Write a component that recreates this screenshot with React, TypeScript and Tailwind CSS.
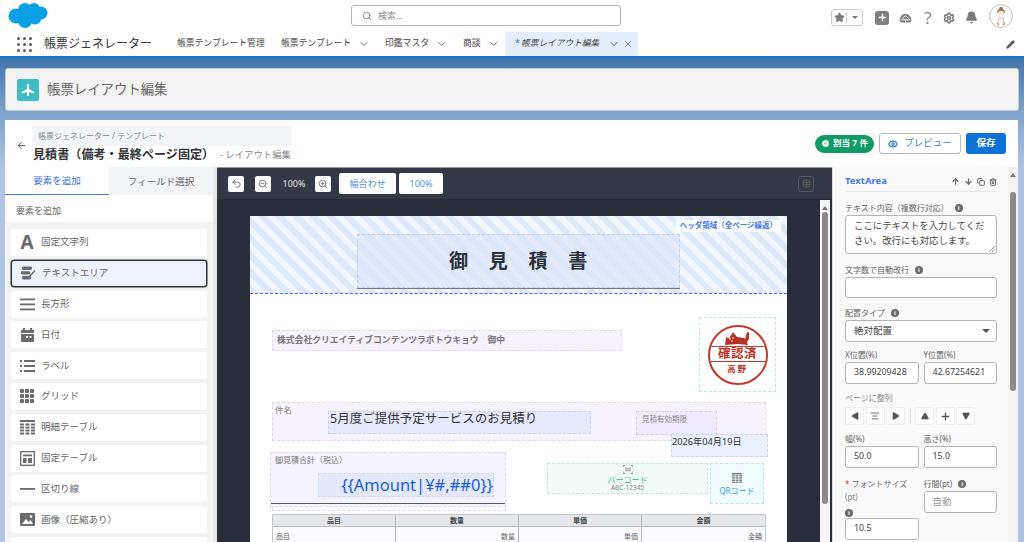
import React from 'react';
import { Search, ChevronDown, X, Star, Plus, Settings, Bell, Pencil, ArrowLeft, Eye, CheckCircle2, Undo2, ZoomIn, ZoomOut, ArrowUp, ArrowDown, Copy, Trash2, AlignCenter, Table, Triangle } from 'lucide-react';

const font = 'font-["Noto_Sans","Noto_Sans_CJK_JP",sans-serif]';

const Logo = () => (
    <svg width="40" height="28" viewBox="0 0 40 28">
        <g fill="#0b9fe3">
            <circle cx="17" cy="9" r="7" />
            <circle cx="26" cy="8" r="6" />
            <circle cx="33" cy="12" r="6.5" />
            <circle cx="8" cy="15" r="7.5" />
            <circle cx="17" cy="20" r="7" />
            <circle cx="27" cy="17" r="6.5" />
        </g>
    </svg>
);

const Waffle = () => (
    <div className="grid grid-cols-3 gap-[3px] w-[15px]">
        {[0, 1, 2, 3, 4, 5, 6, 7, 8].map(i => <div key={i} className="w-[3px] h-[3px] rounded-full bg-[#5c5c5c]" />)}
    </div>
);

const NavItem = ({ label, chevron, className }: { label: string; chevron?: boolean; className?: string }) => (
    <div className={`flex items-center text-[8.8px] text-[#444] whitespace-nowrap ${className ?? ''}`}>
        <span>{label}</span>
        {chevron && <ChevronDown className="w-[12px] h-[12px] ml-[7px] text-[#666]" />}
    </div>
);

const TopBar = () => (
    <div className="h-[32px] flex items-start relative bg-white">
        <div className="ml-[8px] mt-[1px]"><Logo /></div>
        <div className="absolute left-[351px] top-[5px] w-[270px] h-[21px] border border-[#b5b5b5] rounded-[3px] flex items-center pl-[10px] text-[9px] text-[#888]">
            <Search className="w-[10px] h-[10px] text-[#777] mr-[6px]" />検索...
        </div>
        <div className="ml-auto flex items-center mt-[7px] mr-[11px] text-[#8a8a8a]">
            <div className="w-[32px] h-[17px] border border-[#ccc] rounded-[3px] flex items-center mr-[12px]">
                <div className="w-[15px] flex justify-center border-r border-[#ccc]"><Star className="w-[11px] h-[11px] fill-[#7a7a7a] text-[#7a7a7a]" /></div>
                <div className="flex-1 flex justify-center"><div className="w-0 h-0 border-x-[3px] border-x-transparent border-t-[3px] border-t-[#777]" /></div>
            </div>
            <div className="w-[14px] h-[14px] rounded-[3px] bg-[#7f7f7f] flex items-center justify-center mr-[10px]"><Plus className="w-[11px] h-[11px] text-white" strokeWidth={3} /></div>
            <svg width="13" height="13" viewBox="0 0 14 14" className="mr-[11px]">
                <path d="M1 9 A6 6 0 0 1 13 9 A2.4 2.4 0 0 1 11 12.5 H3 A2.4 2.4 0 0 1 1 9 Z" fill="#7f7f7f" />
                <path d="M3.5 8 L7 5 L10.5 8 M2 9.5 H12 M7 9.5 V12.5" stroke="#fff" strokeWidth="1" fill="none" />
            </svg>
            <span className="w-[10px] mr-[10px] text-center text-[17px] leading-none text-[#8a8a8a]">?</span>
            <Settings className="w-[12px] h-[12px] mr-[10px] text-[#7a7a7a]" strokeWidth={3} />
            <Bell className="w-[13px] h-[13px] mr-[11px] fill-[#7a7a7a] text-[#7a7a7a]" />
            <svg width="24" height="24" viewBox="0 0 24 24" className="-mt-[3px]">
                <circle cx="12" cy="12" r="11.4" fill="#fff" stroke="#bbb" />
                <circle cx="12" cy="4.5" r="1.8" fill="#9a6b4f" />
                <path d="M8 9 A4 4 0 0 1 16 9 Z" fill="#9a6b4f" />
                <circle cx="12" cy="10" r="3.2" fill="#fbeee2" />
                <path d="M8.5 21 L10 14 H14 L15.5 21" fill="#fff" stroke="#999" strokeWidth=".6" />
                <path d="M8 19 L10 21 M16 19 L14 21" stroke="#e0a030" strokeWidth="1.6" />
            </svg>
        </div>
    </div>
);

const NavBar = () => (
    <div className="h-[26px] flex items-stretch border-b-2 border-[#1b76d2] bg-white">
        <div className="ml-[17px] mr-[12px] flex items-center"><Waffle /></div>
        <div className="w-[108px] text-[12px] text-[#333] flex items-center mr-[25px] whitespace-nowrap">帳票ジェネレーター</div>
        <NavItem label="帳票テンプレート管理" className="w-[88px] mr-[16px]" />
        <NavItem label="帳票テンプレート" chevron className="w-[89px] mr-[15px]" />
        <NavItem label="印鑑マスタ" chevron className="w-[62px] mr-[16px]" />
        <NavItem label="商談" chevron className="w-[36px] mr-[6px]" />
        <div className="w-[133px] -mt-[2px] border-t-2 border-[#1b76d2] bg-[#e4eefa] flex items-center pl-[10px] text-[8.7px] italic text-[#444] whitespace-nowrap">
            <span className="w-[6px] text-[#1b76d2] not-italic">*</span>
            <span className="w-[78px]">帳票レイアウト編集</span>
            <ChevronDown className="w-[12px] h-[12px] ml-[9px] text-[#666]" />
            <X className="w-[10px] h-[10px] ml-[3px] text-[#666]" />
        </div>
        <div className="ml-auto mr-[9px] flex items-center"><Pencil className="w-[9px] h-[9px] text-[#555] fill-[#555]" /></div>
    </div>
);

const PageHeader = () => (
    <div className="mx-[5px] mt-[10px] h-[43px] bg-[#f3f3f3] border border-[#c9c9c9] rounded-[3px] flex items-center pl-[11px]">
        <div className="w-[22px] h-[22px] bg-[#3fbcc4] rounded-[2px] flex items-center justify-center mr-[8px]">
            <svg width="14" height="14" viewBox="0 0 14 14" fill="#fff"><path d="M6.2 1 H7.8 L8 6 L13 9 V10.5 L8 9 V13 H6 V9 L1 10.5 V9 L6 6 Z" /></svg>
        </div>
        <span className="text-[13.4px] text-[#666] whitespace-nowrap">帳票レイアウト編集</span>
    </div>
);

const EditorHeader = () => (
    <div className="h-[47px] flex items-center relative">
        <ArrowLeft className="w-[11px] h-[11px] text-[#555] ml-[11px] mr-[5px] mt-[4px]" />
        <div className="w-[259px] pt-[3px]">
            <div className="h-[20px] bg-[#f3f4f8] text-[8px] text-[#888] flex items-center pl-[6px]">帳票ジェネレーター / テンプレート</div>
            <div className="h-[19px] flex items-center justify-between whitespace-nowrap pl-[1px]">
                <span className="text-[12.1px] font-bold text-[#333]">見積書（備考・最終ページ固定）</span>
                <span className="text-[9.4px] text-[#888]">- レイアウト編集</span>
            </div>
        </div>
        <div className="ml-auto mr-[12px] flex items-center">
            <div className="h-[18px] w-[59px] rounded-full bg-[#0f9a68] text-white text-[8.5px] font-bold flex items-center justify-center mr-[5px] whitespace-nowrap">
                <CheckCircle2 className="w-[9px] h-[9px] mr-[3px] fill-white text-[#0f9a68]" />割当 7 件
            </div>
            <div className="h-[21px] w-[82px] border border-[#b8b8b8] rounded-[3px] bg-white text-[#3b87d6] text-[9.5px] flex items-center justify-center mr-[5px]">
                <Eye className="w-[10px] h-[10px] mr-[6px]" strokeWidth={3} />プレビュー
            </div>
            <div className="h-[21px] w-[40px] rounded-[3px] bg-[#0b72d6] text-white text-[9.5px] font-bold flex items-center justify-center">保存</div>
        </div>
    </div>
);

const TextAreaIcon = () => (
    <svg width="15" height="14" viewBox="0 0 15 14" fill="#6b6b6b"><rect x="1" y="0.5" width="10" height="3.4" rx="1.4" /><rect x="0" y="5.2" width="9" height="3.4" rx="1.4" /><rect x="1" y="10" width="9" height="3.4" rx="1.4" /><path d="M8.5 10.5 L14 4.5" stroke="#6b6b6b" strokeWidth="1.5" /></svg>
);
const RowsIcon = () => <svg width="15" height="13" viewBox="0 0 15 13" fill="#6b6b6b"><rect y="0.5" width="15" height="1.8" /><rect y="5.5" width="15" height="1.8" /><rect y="10.5" width="15" height="1.8" /></svg>;
const CalIcon = () => <svg width="15" height="14" viewBox="0 0 15 14" fill="#6b6b6b"><rect x="3" width="2" height="3" /><rect x="10" width="2" height="3" /><path d="M1 2 H14 V5 H1 Z" /><path d="M1 6 H14 V13 A1 1 0 0 1 13 14 H2 A1 1 0 0 1 1 13 Z" /><rect x="6" y="8" width="2" height="2" fill="#fff" /><rect x="9.5" y="8" width="2" height="2" fill="#fff" /></svg>;
const ListIcon = () => <svg width="15" height="12" viewBox="0 0 15 12" fill="#6b6b6b"><rect width="2" height="2" /><rect x="4" width="11" height="2" /><rect y="5" width="2" height="2" /><rect x="4" y="5" width="11" height="2" /><rect y="10" width="2" height="2" /><rect x="4" y="10" width="11" height="2" /></svg>;
const DotsIcon = () => <svg width="15" height="14" viewBox="0 0 15 14" fill="#6b6b6b">{[0, 5, 10].flatMap(x => [0, 5, 10].map(y => <rect key={`${x}-${y}`} x={x} y={y} width="4" height="4" rx="1" />))}</svg>;
const DetailIcon = () => <svg width="15" height="15" viewBox="0 0 15 15" fill="#6b6b6b"><rect width="15" height="2" />{[0, 5.5, 11].flatMap(x => [3.5, 6.5, 9.5, 12.5].map(y => <rect key={`${x}-${y}`} x={x} y={y} width="4" height="2" />))}</svg>;
const FixedIcon = () => <svg width="15" height="15" viewBox="0 0 15 15" fill="none" stroke="#6b6b6b"><rect x=".7" y=".7" width="13.6" height="13.6" strokeWidth="1.3" /><rect x="3" y="3.5" width="9" height="1.8" fill="#6b6b6b" stroke="none" /><rect x="3" y="7" width="3.5" height="5" fill="#6b6b6b" stroke="none" /><rect x="8" y="7" width="4" height="5" fill="#6b6b6b" stroke="none" /></svg>;
const LineIcon = () => <svg width="15" height="4" viewBox="0 0 15 4" fill="#6b6b6b"><rect y="1" width="15" height="1.8" /></svg>;
const ImgIcon = () => <svg width="15" height="13" viewBox="0 0 15 13"><rect width="15" height="13" rx="1" fill="#6b6b6b" /><path d="M2 11 L6 6 L8.5 9 L10.5 7 L13 11 Z" fill="#fff" /><circle cx="11" cy="3.5" r="1.3" fill="#fff" /></svg>;

const palette: { label: string; icon: React.ReactNode; selected?: boolean }[] = [
    { label: '固定文字列', icon: <span className="text-[19px] font-bold text-[#6b6b6b] leading-none">A</span> },
    { label: 'テキストエリア', icon: <TextAreaIcon />, selected: true },
    { label: '長方形', icon: <RowsIcon /> },
    { label: '日付', icon: <CalIcon /> },
    { label: 'ラベル', icon: <ListIcon /> },
    { label: 'グリッド', icon: <DotsIcon /> },
    { label: '明細テーブル', icon: <DetailIcon /> },
    { label: '固定テーブル', icon: <FixedIcon /> },
    { label: '区切り線', icon: <LineIcon /> },
    { label: '画像（圧縮あり）', icon: <ImgIcon /> },
    { label: '', icon: null },
];

const LeftPanel = () => (
    <div className="w-[208px] shrink-0 flex flex-col bg-[#f3f3f3] border-r-[4px] border-[#e8e8e8] box-content overflow-hidden">
        <div className="h-[28px] flex text-[9.5px] shrink-0">
            <div className="w-[104px] pt-[2px] bg-white border-b border-[#4477e8] text-[#3b6fe0] flex items-center justify-center">要素を追加</div>
            <div className="flex-1 pt-[2px] bg-[#f3f4f6] text-[#666] flex items-center justify-center">フィールド選択</div>
        </div>
        <div className="h-[27px] pt-[4px] bg-white text-[9px] text-[#666] flex items-center pl-[11px] shrink-0">要素を追加</div>
        <div className="px-[6px] pt-[7px] flex flex-col gap-[3.8px]">
            {palette.map(p => (
                <div key={p.label || 'next'} className={`h-[27px] shrink-0 rounded-[2px] flex items-center text-[9.5px] text-[#666] ${p.selected ? 'bg-[#eef2fc] border border-[#333] rounded-[3px] shadow-[0_0_0_0.5px_#333]' : 'bg-white'}`}>
                    <div className="w-[30px] pl-[2px] flex justify-center">{p.icon}</div>
                    {p.label}
                </div>
            ))}
        </div>
    </div>
);

const ToolIcon = ({ children }: { children: React.ReactNode }) => (
    <div className="w-[16px] h-[16px] bg-white rounded-[2px] flex items-center justify-center text-[#666]">{children}</div>
);

const CanvasToolbar = () => (
    <div className="h-[33px] shrink-0 bg-[#353846] border-t border-[#999] border-b border-b-[#2a2d38] flex items-center pl-[11px] text-[9px]">
        <ToolIcon><Undo2 className="w-[11px] h-[11px]" /></ToolIcon>
        <div className="w-[11px]" />
        <ToolIcon><ZoomOut className="w-[10px] h-[10px]" /></ToolIcon>
        <span className="w-[22px] text-[#e4e4e4] ml-[11.5px] mr-[10.5px] whitespace-nowrap">100%</span>
        <ToolIcon><ZoomIn className="w-[10px] h-[10px]" /></ToolIcon>
        <div className="w-[57px] h-[21px] ml-[8px] bg-white rounded-[2px] text-[#4a90d9] flex items-center justify-center">幅合わせ</div>
        <div className="w-[44px] h-[21px] ml-[3px] bg-white rounded-[2px] text-[#4a90d9] flex items-center justify-center">100%</div>
        <div className="ml-auto mr-[18px] w-[16px] h-[16px] border border-[#55586a] rounded-[3px] flex items-center justify-center">
            <Table className="w-[9px] h-[9px] text-[#666]" />
        </div>
    </div>
);

const Scrollbar = ({ thumbTop, thumbH, cls }: { thumbTop: number; thumbH: number; cls: string }) => (
    <div className={`relative shrink-0 ${cls}`}>
        <div className="absolute top-[6px] left-1/2 -translate-x-1/2 w-0 h-0 border-x-[3.5px] border-x-transparent border-b-[4px] border-b-[#777]" />
        <div className="absolute left-1/2 -translate-x-1/2 w-[6px] rounded-full bg-[#8a8a8a]" style={{ top: thumbTop, height: thumbH }} />
    </div>
);

const Paper = () => (
    <div className="absolute left-[33px] top-[16px] w-[537px] h-[600px] bg-white overflow-hidden">
        {/* header band */}
        <div className="absolute left-0 top-0 w-full h-[78px] border-b-[1.5px] border-dashed border-[#2f74f5] bg-[repeating-linear-gradient(45deg,#dde8fb_0,#dde8fb_6px,#f1f5fe_6px,#f1f5fe_12px)]" />
        <div className="absolute right-[6px] top-[4px] px-[4px] h-[12px] bg-white/80 rounded-[2px] text-[7.5px] font-bold text-[#4477e8] flex items-center whitespace-nowrap">ヘッダ領域（全ページ繰返）</div>
        <div className="absolute left-[107px] top-[18px] w-[323px] h-[54px] bg-[#dbe6fb]/70 border border-dashed border-[#bcd0f5] shadow-[0_1px_0_#777] text-[19px] font-bold text-[#2b2f3a] flex items-center justify-center tracking-[20.7px] pl-[20px]">御見積書</div>

        <div className="absolute left-[22px] top-[114px] w-[350px] h-[21px] bg-[#f7f3fe] border border-dashed border-[#e0d4f8] text-[8.8px] font-bold text-[#777] flex items-center pl-[4px] whitespace-nowrap">株式会社クリエイティブコンテンツラボトウキョウ　御中</div>

        {/* stamp */}
        <div className="absolute left-[449px] top-[101px] w-[77px] h-[75px] border border-dashed border-[#bfe6d8] flex items-center justify-center">
            <div className="w-[60px] h-[60px] rounded-full border-2 border-[#c0392b] flex flex-col items-center overflow-hidden">
                <svg width="28" height="15" viewBox="0 0 28 15" fill="#b83226" className="mt-[4px] shrink-0">
                    <path d="M1 14 L2 6 L5 7.5 L9 1 L13 6 L20 7 L21 8 L23 1 L25 1.5 L25 8 L23 11 L24 14 L14 13 Z" />
                    <circle cx="6" cy="8" r=".8" fill="#fff" /><circle cx="9" cy="7" r=".8" fill="#fff" /><circle cx="8" cy="10" r=".8" fill="#fff" />
                </svg>
                <div className="w-full shrink-0 border-y border-[#c0392b] text-[12.5px] font-bold text-[#b83226] text-center leading-[14px] tracking-[0.04em] whitespace-nowrap">確認済</div>
                <div className="text-[8.5px] font-bold text-[#b83226] mt-[1px] tracking-[0.2em] leading-[12px]">高野</div>
            </div>
        </div>

        {/* subject */}
        <div className="absolute left-[22px] top-[186px] w-[494px] h-[39px] bg-[#f7f3fe] border border-dashed border-[#e0d4f8]" />
        <div className="absolute left-[25px] top-[188px] text-[8.5px] text-[#888]">件名</div>
        <div className="absolute left-[78px] top-[195px] w-[263px] h-[23px] bg-[#e6e9fb] border border-dashed border-[#c5d3f7] text-[12.5px] text-[#333] flex items-start leading-[14px] whitespace-nowrap pl-[1px]">5月度ご提供予定サービスのお見積り</div>
        <div className="absolute left-[386px] top-[195px] w-[81px] h-[24px] bg-[#efeafc] border border-dashed border-[#d8ccf5] text-[7.5px] text-[#888] pl-[5px] pt-[2px]">見積有効期限</div>
        <div className="absolute left-[421px] top-[218px] w-[97px] h-[23px] bg-[#ebf0fd] border border-dashed border-[#c5d3f7] text-[9.2px] text-[#333] leading-[12px] pt-[1px] whitespace-nowrap">2026年04月19日</div>

        {/* total */}
        <div className="absolute left-[20px] top-[236px] w-[236px] h-[55px] bg-[#f5f3fd] border border-dashed border-[#e0d4f8]" />
        <div className="absolute left-[25px] top-[238px] text-[8px] text-[#777]">御見積合計（税込）</div>
        <div className="absolute left-[68px] top-[257px] w-[176px] h-[24px] bg-[#e4e8fb] border border-dashed border-[#cfdaf8] text-[16.5px] text-[#1a5fd8] flex items-center justify-end leading-none whitespace-nowrap">{'{{Amount|¥#,##0}}'}</div>
        <div className="absolute left-[21px] top-[287px] w-[234px] border-t border-[#555]" />
        <div className="absolute left-[22px] top-[291px] w-[234px] h-[4px] border border-t-0 border-dashed border-[#e0d4f8]" />

        {/* barcode */}
        <div className="absolute left-[297px] top-[247px] w-[161px] h-[31px] bg-[#f1faf6] border border-dashed border-[#bfe6d8] flex flex-col items-center justify-center leading-[9px]">
            <svg width="10" height="9" viewBox="0 0 10 8" fill="none" stroke="#888" strokeWidth="1"><path d="M0 2 V0 H2 M8 0 H10 V2 M0 6 V8 H2 M8 8 H10 V6 M3 2 V6 M5 2 V6 M7 2 V6" /></svg>
            <span className="text-[8px] text-[#3cb98c] mt-[1px]">バーコード</span>
            <span className="text-[6.5px] text-[#888] leading-[8px]">ABC-12345</span>
        </div>
        <div className="absolute left-[460px] top-[247px] w-[54px] h-[41px] bg-[#effbfd] border border-dashed border-[#b5e6ee] flex flex-col items-center justify-center pt-[2px]">
            <svg width="10" height="10" viewBox="0 0 10 10" fill="#777"><rect width="10" height="1.4" />{[0, 3.6, 7.2].flatMap(x => [2.2, 4.4, 6.6, 8.6].map(y => <rect key={`${x}-${y}`} x={x} y={y} width="2.8" height="1.3" />))}</svg>
            <span className="text-[8px] text-[#3aa8cc] mt-[2px]">QRコード</span>
        </div>

        {/* table */}
        <div className="absolute left-[22px] top-[298px] w-[494px] border border-[#c4c8d8] bg-[#fbfaff]">
            <div className="grid grid-cols-4 h-[12px] bg-[#e5e7eb] border-b border-[#bbb] text-[7px] font-bold text-[#444] text-center leading-[11px]">
                <div className="border-r border-[#bbb]">品目</div>
                <div className="border-r border-[#bbb]">数量</div>
                <div className="border-r border-[#bbb]">単価</div>
                <div>金額</div>
            </div>
            <div className="grid grid-cols-4 h-[30px] text-[7px] text-[#666] leading-[8px]">
                <div className="border-r border-[#bbb] pl-[3px] pt-[6px]">品目</div>
                <div className="border-r border-[#bbb] text-right pr-[3px] pt-[6px]">数量</div>
                <div className="border-r border-[#bbb] text-right pr-[3px] pt-[6px]">単価</div>
                <div className="text-right pr-[3px] pt-[6px]">金額</div>
            </div>
        </div>
    </div>
);

const Canvas = () => (
    <div className="w-[615px] shrink-0 flex flex-col bg-[#2a2d3a] overflow-hidden">
        <CanvasToolbar />
        <div className="flex-1 relative overflow-hidden">
            <Paper />
            <div className="absolute right-[2px] top-0 bottom-0 w-[10px]">
                <Scrollbar thumbTop={12} thumbH={292} cls="w-[10px] h-full bg-[#f5f5f5]" />
            </div>
        </div>
    </div>
);

const Dot = ({ flush }: { flush?: boolean }) => (
    <span className={`inline-flex w-[8px] h-[8px] rounded-full bg-[#6b6b6b] items-center justify-center text-white text-[6px] font-bold leading-none ${flush ? '' : 'ml-[6px]'}`}>i</span>
);

const Label = ({ text, info }: { text: string; info?: boolean }) => (
    <div className="flex items-center text-[8px] text-[#666] h-[13px] mb-[1px] whitespace-nowrap">
        {text}
        {info && <Dot />}
    </div>
);

const Input = ({ value, muted, h = 'h-[22px]', num }: { value?: string; muted?: boolean; h?: string; num?: boolean }) => (
    <div className={`${h} border border-[#b5b5b5] rounded-[3px] bg-white flex items-center pl-[8px] ${num ? 'text-[8.8px]' : 'text-[9.5px]'} ${muted ? 'text-[#999]' : 'text-[#444]'}`}>{value}</div>
);

const AlignBtn = ({ children }: { children: React.ReactNode }) => (
    <div className="w-[19px] h-[18px] bg-white border border-[#eee] rounded-[2px] flex items-center justify-center">{children}</div>
);

const tri = 'w-[8px] h-[8px] fill-[#555] text-[#555]';

const RightPanel = () => (
    <div className="flex-1 flex bg-[#f3f3f3] min-w-0 border-l border-[#ddd]">
        <div className="w-[175px] shrink-0 pl-[12px] pr-[11px] pt-[7px] bg-[#f9f9f9] overflow-hidden">
            <div className="h-[18px] flex items-center border-b border-[#e8e8e8] pb-[2px]">
                <span className="text-[9.5px] font-bold text-[#4477e8]">TextArea</span>
                <div className="ml-auto flex items-center gap-[4px] text-[#666]">
                    <ArrowUp className="w-[9px] h-[9px]" strokeWidth={3} />
                    <ArrowDown className="w-[9px] h-[9px]" strokeWidth={3} />
                    <Copy className="w-[8px] h-[8px]" strokeWidth={3} />
                    <Trash2 className="w-[8px] h-[8px]" strokeWidth={3} />
                </div>
            </div>
            <div className="mt-[9px]">
                <Label text="テキスト内容（複数行対応）" info />
                <div className="relative h-[39px] border border-[#b5b5b5] rounded-[3px] bg-white pl-[8px] pr-[8px] pt-[3px] text-[9.4px] leading-[14.5px] text-[#444]">
                    ここにテキストを入力してください。改行にも対応します。
                    <svg width="6" height="6" viewBox="0 0 6 6" className="absolute right-[1px] bottom-[1px]" stroke="#888" strokeWidth=".8"><path d="M0 6 L6 0 M3 6 L6 3" /></svg>
                </div>
            </div>
            <div className="mt-[9px]">
                <Label text="文字数で自動改行" info />
                <Input h="h-[21px]" />
            </div>
            <div className="mt-[8px]">
                <Label text="配置タイプ" info />
                <div className="h-[22px] border border-[#b5b5b5] rounded-[3px] bg-white flex items-center pl-[8px] pr-[6px] text-[9.5px] text-[#444]">
                    絶対配置
                    <div className="ml-auto w-0 h-0 border-x-[4px] border-x-transparent border-t-[4px] border-t-[#555]" />
                </div>
            </div>
            <div className="grid grid-cols-2 gap-[5px] mt-[6px]">
                <div><Label text="X位置(%)" /><Input value="38.99209428" num /></div>
                <div><Label text="Y位置(%)" /><Input value="42.67254621" num /></div>
            </div>
            <div className="text-[8px] text-[#888] mt-[7px] h-[13px] leading-[13px]">ページに整列</div>
            <div className="flex items-center gap-[1.5px] mt-[3px]">
                <AlignBtn><Triangle className={`${tri} -rotate-90`} /></AlignBtn>
                <AlignBtn><AlignCenter className="w-[10px] h-[10px] text-[#555]" /></AlignBtn>
                <AlignBtn><Triangle className={`${tri} rotate-90`} /></AlignBtn>
                <div className="w-px h-[14px] bg-[#ddd] mx-[3px]" />
                <AlignBtn><Triangle className={tri} /></AlignBtn>
                <AlignBtn><Plus className="w-[11px] h-[11px] text-[#555]" strokeWidth={3} /></AlignBtn>
                <AlignBtn><Triangle className={`${tri} rotate-180`} /></AlignBtn>
            </div>
            <div className="grid grid-cols-2 gap-[5px] mt-[7px]">
                <div><Label text="幅(%)" /><Input value="50.0" num /></div>
                <div><Label text="高さ(%)" /><Input value="15.0" num /></div>
            </div>
            <div className="grid grid-cols-2 gap-[5px] mt-[9px]">
                <div>
                    <div className="text-[8px] text-[#666] leading-[13px]"><span className="text-[#c23934]">* </span>フォントサイズ<br /><span className="text-[#888]">(pt)</span></div>
                    <div className="h-[15px] flex items-end pb-[1px]"><Dot flush /></div>
                    <Input value="10.5" num />
                </div>
                <div>
                    <Label text="行間(pt)" info />
                    <Input value="自動" muted />
                </div>
            </div>
        </div>
        <Scrollbar thumbTop={25} thumbH={199} cls="w-[10px] bg-[#f3f3f3]" />
    </div>
);

const App: React.FC = () => {
    return (
        <div className={`w-[1024px] h-[542px] overflow-hidden flex flex-col bg-white ${font}`}>
            <TopBar />
            <NavBar />
            <div className="flex-1 flex flex-col min-h-0 bg-[linear-gradient(#3f74ad_0,#7ea3cc_55px,#aec4e0_110px,#aec4e0_100%)]">
                <PageHeader />
                <div className="ml-[5px] mr-[6px] mt-[9px] flex-1 min-h-0 bg-white flex flex-col">
                    <EditorHeader />
                    <div className="flex-1 flex min-h-0">
                        <LeftPanel />
                        <Canvas />
                        <RightPanel />
                    </div>
                </div>
            </div>
        </div>
    );
};

export default App;
